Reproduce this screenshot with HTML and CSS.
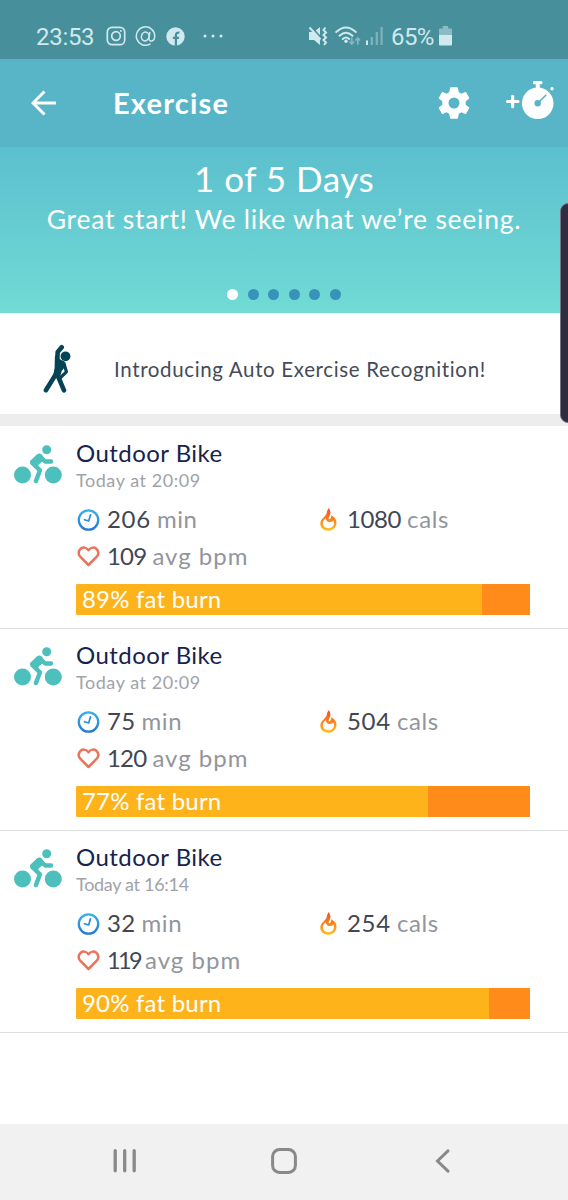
FILE: index.html
```html
<!DOCTYPE html>
<html lang="en">
<head>
<meta charset="utf-8">
<title>Exercise</title>
<link rel="stylesheet" href="styles.css">
</head>
<body>
<svg width="0" height="0" class="defs">
  <defs>
    <linearGradient id="blue" x1="0" y1="0" x2="0" y2="1"><stop offset="0" stop-color="#35b2e8"/><stop offset="1" stop-color="#2878d4"/></linearGradient>
    <linearGradient id="fire" x1="0" y1="0" x2="0" y2="1"><stop offset="0" stop-color="#f0502b"/><stop offset=".45" stop-color="#fb7a1c"/><stop offset="1" stop-color="#fbc41c"/></linearGradient>
    <symbol id="bike" viewBox="0 0 48 40">
      <circle cx="8.5" cy="30" r="8.5"/><circle cx="39.3" cy="30" r="8.5"/><circle cx="32.7" cy="4.7" r="4.5"/>
      <path d="M18.2 17.8 26 25.3 21.9 36.1M26.3 12 31.2 16.5H37" fill="none" stroke="currentColor" stroke-width="4.4" stroke-linecap="round" stroke-linejoin="round"/>
      <path d="M15.8 16.2 22.8 9.5Q25.5 7.4 28 9.7L31 14.3 25 19.3 24 21 18 19.5Z"/>
    </symbol>
    <symbol id="clock" viewBox="0 0 22 22"><circle cx="11" cy="11" r="9.7" fill="none" stroke="url(#blue)" stroke-width="2.3"/><path d="M13 5.8 11.2 12 7 10.7" fill="none" stroke="#278ddd" stroke-width="1.7" stroke-linecap="round" stroke-linejoin="round"/></symbol>
    <symbol id="heart" viewBox="0 0 23 21"><path d="M11.5 19 3 10.4C-1.5 5 6.4-2.4 11.5 4.2 16.6-2.4 24.5 5 20 10.4Z" fill="none" stroke="#ed7259" stroke-width="2.5" stroke-linejoin="round"/></symbol>
    <symbol id="flame" viewBox="0 0 17 23"><path fill="url(#fire)" fill-rule="evenodd" d="M8.8 0C11 3.4 11 5.9 9.3 8.4 8.5 9.9 8.4 11 9.3 11.2 10.4 11.3 11.2 10 11.4 7.3 15.4 9.6 17 12.8 16.4 16 15.5 20.4 12.3 22.8 8.3 22.8 3.8 22.8.3 19.9.3 15.6.3 10.4 6.3 8.2 6.7 4.9 7 3 7.7 1.5 8.8 0ZM6 10C3.7 11.6 2.7 13.6 2.9 15.6 3.2 18.5 5.3 20.2 8.3 20.2 11.4 20.2 13.4 18.6 13.9 16 14.2 14.4 13.9 13.3 13.2 12.4 12 13.8 10.3 14.5 8.5 13.9 6.5 13.2 5.6 11.8 6 10Z"/></symbol>
  </defs>
</svg>
<div class="screen">
  <header class="status">
    <span class="time">23:53</span>
    <svg class="s-insta" width="20" height="20" viewBox="0 0 20 20" fill="none" stroke="currentColor" stroke-width="1.7"><rect x="1.3" y="1.3" width="17.4" height="17.4" rx="4.8"/><circle cx="10" cy="10" r="4.3"/><circle cx="14.9" cy="5.1" r="1" fill="currentColor" stroke="none"/></svg>
    <svg class="s-at" width="21" height="21" viewBox="0 0 21 21" fill="none" stroke="currentColor" stroke-width="1.5" stroke-linecap="round"><path d="M15 18.1A9.2 9.2 0 1 1 19.7 10.2C19.7 16 14 16.4 14 12.5L14.8 6.5"/><ellipse cx="10.2" cy="10.5" rx="3.8" ry="4.4" transform="rotate(14 10.2 10.5)"/></svg>
    <svg class="s-fb" width="19" height="19" viewBox="0 0 19 19"><circle cx="9.5" cy="9.5" r="9.2" fill="currentColor"/><path d="M9.9 19V8.4Q9.9 5.2 13.4 5.6M6.9 10.9H13" fill="none" stroke="#478f9b" stroke-width="2.2"/></svg>
    <svg class="s-dots" width="20" height="4" viewBox="0 0 20 4" fill="currentColor"><circle cx="2" cy="2" r="1.5"/><circle cx="10" cy="2" r="1.5"/><circle cx="18" cy="2" r="1.5"/></svg>
    <svg class="s-mute" width="20" height="20" viewBox="0 0 20 20"><path fill="currentColor" d="M1 6H6L12 1V19L6 14H1Z"/><path d="M1 -1 13 12" stroke="#478f9b" stroke-width="2.5"/><path d="M1.5 1.5 12.5 13.5M17.5 1.5 15.5 4 18 6.5 15.5 9 18 11.5 15.5 14 18 16.5 16 19" fill="none" stroke="currentColor" stroke-width="2"/></svg>
    <svg class="s-wifi" width="26" height="20" viewBox="0 0 26 20" fill="none" stroke="currentColor" stroke-width="1.9" stroke-linecap="round"><path d="M1.2 6Q11 -3.2 20.8 6M4.5 9.8Q11 3.7 17.5 9.8M7.8 13Q11 10.1 14.2 13"/><circle cx="11" cy="15.3" r="1.7" fill="currentColor" stroke="none"/><g opacity=".45" stroke-width="1.7"><path d="M16.8 12V18M14.9 16 16.8 18 18.7 16M22.8 18V12M20.9 14 22.8 12 24.7 14"/></g></svg>
    <svg class="s-signal" width="18" height="18" viewBox="0 0 18 18" fill="currentColor"><rect x="1" y="13.5" width="2" height="4.5"/><g opacity=".4"><rect x="5.7" y="10" width="2.2" height="8"/><rect x="10.7" y="5" width="2.2" height="13"/><rect x="15.5" width="2.2" height="18"/></g></svg>
    <span class="percent">65%</span>
    <svg class="s-battery" width="13" height="20" viewBox="0 0 13 20" fill="currentColor"><path opacity=".5" d="M0 3.5Q0 2.5 1 2.5H3.8V0H9.2V2.5H12Q13 2.5 13 3.5V9H0Z"/><path d="M0 9H13V18.5Q13 19.5 12 19.5H1Q0 19.5 0 18.5Z"/></svg>
  </header>

  <div class="appbar">
    <svg class="back" width="26" height="26" viewBox="0 0 26 26" fill="none" stroke="#fff" stroke-width="3"><path d="M25 13H2M13.5 1.5 2 13 13.5 24.5"/></svg>
    <h1>Exercise</h1>
    <svg class="gear" width="32" height="32" viewBox="0 0 32 32"><path fill="#fff" fill-rule="evenodd" d="M12.8.3Q12.2.3 12 1L11.3 5.1 8.7 6.7 4.8 5.1Q4.1 4.9 3.8 5.4L.8 10.7Q.5 11.3 1 11.7L4.3 14.3V17.7L1 20.3Q.5 20.7.8 21.3L3.8 26.6Q4.1 27.1 4.8 26.9L8.7 25.3 11.3 26.9 12 31Q12.2 31.7 12.8 31.7H19.2Q19.8 31.7 20 31L20.7 26.9 23.3 25.3 27.2 26.9Q27.9 27.1 28.2 26.6L31.2 21.3Q31.5 20.7 31 20.3L27.7 17.7V14.3L31 11.7Q31.5 11.3 31.2 10.7L28.2 5.4Q27.9 4.9 27.2 5.1L23.3 6.7 20.7 5.1 20 1Q19.8.3 19.2.3ZM16 10.5A5.5 5.5 0 1 0 16 21.5 5.5 5.5 0 1 0 16 10.5Z"/></svg>
    <svg class="timer" width="48" height="39" viewBox="0 0 48 39"><g fill="#fff"><circle cx="31.7" cy="22.3" r="15.8"/><rect x="27" y="0" width="9.4" height="3.3" rx="1.2"/><rect x="29.8" y="2" width="4" height="6"/><circle cx="46" cy="7.7" r="1.7"/></g><path d="M6.6 15.3V25.7M1.6 20.5H12" stroke="#fff" stroke-width="3.2" stroke-linecap="round"/><path d="M31.7 22.3 39.8 14.2" stroke="#58b4c7" stroke-width="1.6" stroke-linecap="round"/><circle cx="31.7" cy="22.3" r="3.2" fill="#58b4c7"/></svg>
  </div>

  <section class="hero">
    <h2>1 of 5 Days</h2>
    <p>Great start! We like what we’re seeing.</p>
    <div class="dots"><i class="on"></i><i></i><i></i><i></i><i></i><i></i></div>
  </section>

  <section class="intro">
    <svg width="28" height="50" viewBox="0 0 28 50" fill="none" stroke="#054456" stroke-linecap="round" stroke-linejoin="round"><circle cx="22.5" cy="12.3" r="4.9" fill="#054456" stroke="none"/><path stroke-width="4.6" d="M18.7 3.3 14.7 8 14.2 17M13 30 2.9 46.2M14.5 31 21 46.3"/><path stroke-width="3.2" d="M21 19.5 23.4 27.8 17 34.2"/><path stroke-width="1.6" d="M12.7 12.5Q15 16 20.5 17.7L22 21.5 17.8 27 16.2 33 10.8 32.5 12.4 24Z" fill="#054456"/></svg>
    <span>Introducing Auto Exercise Recognition!</span>
  </section>

  <main>
    <article class="entry">
      <svg class="bike" width="48" height="40"><use href="#bike"/></svg>
      <div class="body">
        <h3>Outdoor Bike</h3>
        <div class="when">Today at 20:09</div>
        <div class="stats">
          <div class="stat"><svg width="22" height="22"><use href="#clock"/></svg><b>206</b><span>min</span></div>
          <div class="stat cals"><svg width="17" height="23"><use href="#flame"/></svg><b class="wide">1080</b><span>cals</span></div>
          <div class="stat bpm"><svg width="23" height="21"><use href="#heart"/></svg><b>109</b><span>avg bpm</span></div>
        </div>
        <div class="bar"><div class="fill" style="width:406px">89% fat burn</div></div>
      </div>
    </article>
    <article class="entry">
      <svg class="bike" width="48" height="40"><use href="#bike"/></svg>
      <div class="body">
        <h3>Outdoor Bike</h3>
        <div class="when">Today at 20:09</div>
        <div class="stats">
          <div class="stat"><svg width="22" height="22"><use href="#clock"/></svg><b class="short">75</b><span>min</span></div>
          <div class="stat cals"><svg width="17" height="23"><use href="#flame"/></svg><b>504</b><span>cals</span></div>
          <div class="stat bpm"><svg width="23" height="21"><use href="#heart"/></svg><b>120</b><span>avg bpm</span></div>
        </div>
        <div class="bar"><div class="fill" style="width:352px">77% fat burn</div></div>
      </div>
    </article>
    <article class="entry">
      <svg class="bike" width="48" height="40"><use href="#bike"/></svg>
      <div class="body">
        <h3>Outdoor Bike</h3>
        <div class="when late">Today at 16:14</div>
        <div class="stats">
          <div class="stat"><svg width="22" height="22"><use href="#clock"/></svg><b class="short">32</b><span>min</span></div>
          <div class="stat cals"><svg width="17" height="23"><use href="#flame"/></svg><b>254</b><span>cals</span></div>
          <div class="stat bpm"><svg width="23" height="21"><use href="#heart"/></svg><b class="narrow">119</b><span>avg bpm</span></div>
        </div>
        <div class="bar"><div class="fill" style="width:413px">90% fat burn</div></div>
      </div>
    </article>
  </main>

  <nav>
    <svg width="24" height="26" viewBox="0 0 24 26" stroke="#898989" stroke-width="3.3" stroke-linecap="round"><path d="M2.2 2.7V22.8M11.7 2.7V22.8M21.2 2.7V22.8"/></svg>
    <svg width="26" height="26" viewBox="0 0 26 26" fill="none" stroke="#898989" stroke-width="3"><rect x="1.6" y="1.6" width="22.8" height="22.8" rx="7"/></svg>
    <svg width="16" height="26" viewBox="0 0 16 26" fill="none" stroke="#898989" stroke-width="3" stroke-linecap="round"><path d="M13 2.8 2.5 13 13 23.2"/></svg>
  </nav>
  <div class="edge"></div>
</div>
</body>
</html>
```
FILE: styles.css
```css
* { box-sizing: border-box; }
body { margin: 0; background: #fff; font-family: Lato, "Open Sans", sans-serif; }
h1, h2, h3, p { margin: 0; font-weight: 400; }
svg { display: block; flex: none; }
.defs { position: absolute; }
.screen { position: relative; width: 568px; height: 1200px; display: flex; flex-direction: column; overflow: hidden; white-space: nowrap; }

.status { height: 59px; flex: none; background: #478f9b; color: #cfe9ee; display: flex; align-items: center; padding: 13px 0 0 36px; font-family: Roboto, sans-serif; font-size: 24px; }
.time { width: 70px; letter-spacing: -.3px; padding-top: 1px; }
.s-at { margin-left: 9px; }
.s-fb { margin-left: 10px; }
.s-dots { margin-left: 18px; }
.s-mute { margin-left: 85px; }
.s-wifi { margin-left: 7px; }
.s-signal { margin-left: 4px; }
.percent { width: 48px; margin-left: 8px; letter-spacing: -.6px; padding-top: 1px; }

.appbar { height: 88px; flex: none; background: #58b4c7; display: flex; align-items: center; padding-left: 31px; color: #fff; }
.appbar h1 { width: 325px; height: 35px; margin-left: 56px; font-size: 29px; font-weight: 700; letter-spacing: 1.2px; line-height: 33px; }
.timer { margin: 0 0 6px 36px; }

.hero { height: 166px; flex: none; background: linear-gradient(#5cbfce, #71dbd5); color: #fff; text-align: center; padding-top: 10px; }
.hero h2 { font-size: 35px; line-height: 42px; letter-spacing: .5px; }
.hero p { font-size: 26.5px; line-height: 32px; margin-top: 4px; letter-spacing: .75px; }
.dots { display: flex; justify-content: center; gap: 9.5px; margin-top: 54px; }
.dots i { width: 11px; height: 11px; border-radius: 50%; background: #3793b9; }
.dots .on { background: #fff; }

.intro { height: 113px; flex: none; display: flex; align-items: center; gap: 43px; padding: 0 0 0 43px; border-bottom: 12px solid #ededed; color: #454b58; font-size: 20.5px; }
.intro svg { margin-top: 11px; }
.intro span { margin-top: 11px; letter-spacing: .64px; }

main { flex: 1; padding-top: 1px; }
.entry { height: 202px; display: flex; padding: 11px 0 0 14px; border-bottom: 1px solid #ddd; color: #16234d; }
.bike { margin-top: 7px; color: #4dc0bd; fill: currentColor; }
.body { width: 454px; margin-left: 14px; }
.body h3 { font-size: 24px; line-height: 30px; letter-spacing: .45px; }
.when { font-size: 18px; line-height: 22px; color: #a0a3a9; margin-top: 1px; letter-spacing: .55px; }
.late { letter-spacing: -.3px; }
.stats { display: grid; grid-template-columns: 243px 1fr; grid-auto-rows: 37px; margin-top: 9px; }
.stat { display: flex; align-items: center; font-size: 24px; padding-left: 1px; color: #92959c; }
.stat svg { width: 23px; margin-top: 2px; }
.stat b { font-weight: 400; color: #414754; margin-left: 7px; letter-spacing: .7px; }
.stat span { margin-left: 6px; letter-spacing: .6px; }
.stat .short { letter-spacing: .3px; }
.stat .wide { letter-spacing: -.4px; }
.cals svg { width: 17px; }
.cals b { margin-left: 10px; }
.bpm b { letter-spacing: -.8px; }
.bpm .narrow { letter-spacing: -2.6px; font-size: 23.5px; }
.bpm .narrow + span { margin-left: 5px; }
.bpm span { letter-spacing: 1px; }
.bar { display: flex; height: 31px; margin-top: 10px; background: #ff8c1a; border-radius: 2px 0 0 2px; overflow: hidden; }
.fill { background: #ffb31a; color: #fff; font-size: 24px; line-height: 30px; padding-left: 6px; letter-spacing: .2px; }

nav { height: 76px; flex: none; background: #f1f1f1; display: flex; align-items: center; padding: 0 0 2px 113px; }
nav svg:nth-child(2) { margin-left: 134px; }
nav svg:nth-child(3) { margin-left: 138px; }
.edge { position: absolute; left: 560px; top: 203px; width: 20px; height: 220px; border-radius: 8px; background: #302d40; border: 1px solid #77727f; }
```
